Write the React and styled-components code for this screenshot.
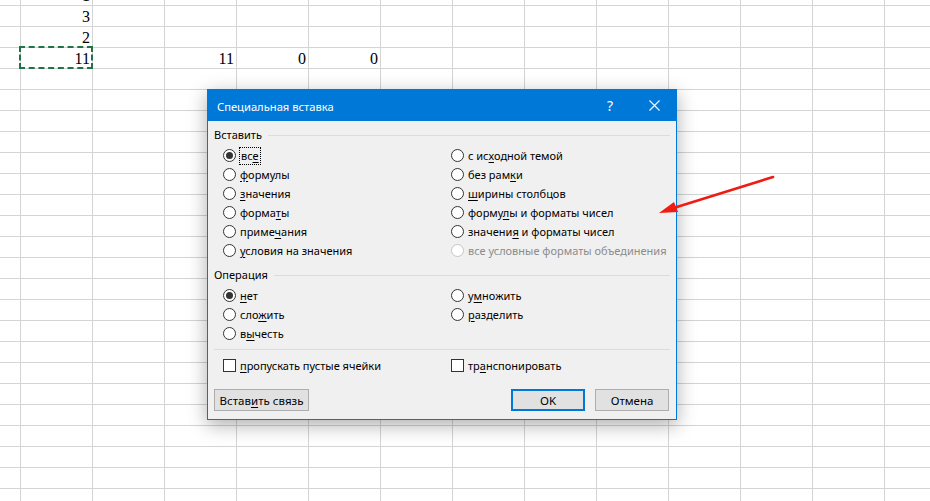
import React from "react";
import styled, { createGlobalStyle } from "styled-components";

const Global = createGlobalStyle`
  html, body { margin: 0; padding: 0; background: #fff; }
  body { overflow: hidden; }
`;

const Page = styled.div`
  position: relative;
  width: 930px;
  height: 501px;
  overflow: hidden;
  background: #fff;
`;

const Sheet = styled.div`
  display: grid;
  grid-template-columns: 21px repeat(13, 72px);
  grid-auto-rows: 21px;
  margin-top: -15px;
`;

const Cell = styled.div`
  position: relative;
  box-sizing: border-box;
  border-right: 1px solid #d4d4d4;
  border-bottom: 1px solid #d4d4d4;
  font-family: "Liberation Serif", serif;
  font-size: 16px;
  line-height: 21px;
  text-align: right;
  padding-right: 2px;
  color: #000;
`;

const Ants = styled.span`
  position: absolute;
  left: -2px;
  top: -2px;
  right: -1px;
  bottom: -1px;
  border: 2px dashed #217346;
`;

const Dialog = styled.div`
  position: absolute;
  left: 207px;
  top: 89px;
  width: 470px;
  box-sizing: border-box;
  border: 1px solid #0078d7;
  background: #f0f0f0;
  box-shadow: 0 5px 18px rgba(0, 0, 0, 0.32);
  font-family: "Noto Sans", sans-serif;
  font-size: 11px;
  color: #000;
`;

const TitleBar = styled.div`
  display: flex;
  align-items: center;
  height: 31px;
  background: #0078d7;
  color: #fff;
`;

const Title = styled.div`
  flex: 1;
  padding-left: 9px;
  font-size: 11.2px;
  margin-top: 1px;
`;

const TitleButton = styled.div`
  width: 44px;
  height: 31px;
  display: flex;
  align-items: center;
  justify-content: center;
  font-size: 14px;
`;

const Body = styled.div`
  padding: 4px 6px 8px 6px;
  display: flex;
  flex-direction: column;
`;

const SectionHeader = styled.div`
  display: flex;
  align-items: center;
  height: 19px;
  margin-top: ${(p) => p.$mt || 0}px;
  margin-bottom: 2px;
  &::after {
    content: "";
    flex: 1;
    height: 1px;
    background: #dcdcdc;
    margin-left: 6px;
    margin-top: 1px;
  }
`;

const OptionGrid = styled.div`
  display: grid;
  grid-template-columns: 228px 1fr;
  grid-auto-flow: column;
  grid-template-rows: repeat(${(p) => p.$rows}, 19px);
  padding-left: 9px;
`;

const Option = styled.div`
  display: flex;
  align-items: center;
  height: 19px;
  white-space: nowrap;
  color: ${(p) => (p.$disabled ? "#8c8c8c" : "#000")};
`;

const RadioCircle = styled.span`
  box-sizing: border-box;
  width: 13px;
  height: 13px;
  border-radius: 50%;
  border: 1px solid ${(p) => (p.$disabled ? "#c6c6c6" : "#333")};
  background: #fff;
  margin-right: 4px;
  display: flex;
  align-items: center;
  justify-content: center;
  flex: none;
  &::after {
    content: "";
    display: ${(p) => (p.$checked ? "block" : "none")};
    width: 7px;
    height: 7px;
    border-radius: 50%;
    background: #333;
  }
`;

const CheckBox = styled.span`
  box-sizing: border-box;
  width: 13px;
  height: 13px;
  border: 1px solid #333;
  background: #fff;
  margin-right: 4px;
  flex: none;
`;

const Text = styled.span`
  white-space: pre;
`;

const Focus = styled.span`
  outline: 1px dotted #000;
  outline-offset: 0px;
  padding: 1px 1px;
  line-height: 14px;
`;

const Key = styled.span`
  text-decoration: underline;
  text-underline-offset: 2px;
`;

const Rule = styled.div`
  height: 1px;
  background: #dcdcdc;
  margin-top: 6px;
  margin-bottom: 6px;
`;

const CheckGrid = styled.div`
  display: grid;
  grid-template-columns: 228px 1fr;
  padding-left: 9px;
`;

const ButtonRow = styled.div`
  display: flex;
  align-items: center;
  margin-top: 14px;
  padding-right: 1px;
`;

const Button = styled.div`
  box-sizing: border-box;
  height: 22px;
  width: ${(p) => p.$w || 74}px;
  margin-left: ${(p) => p.$ml || 0}px;
  background: #e1e1e1;
  border: ${(p) => (p.$primary ? "2px solid #0078d7" : "1px solid #adadad")};
  display: flex;
  align-items: center;
  justify-content: center;
  font-size: 11.5px;
`;

const Spacer = styled.div`
  flex: 1;
`;

const Arrow = styled.svg`
  position: absolute;
  left: 650px;
  top: 170px;
`;

const Lbl = ({ parts }) => (
  <Text>
    {parts.map((p, i) =>
      typeof p === "string" ? <React.Fragment key={i}>{p}</React.Fragment> : <Key key={i}>{p[0]}</Key>
    )}
  </Text>
);

const Radio = ({ checked, disabled, focus, parts }) => (
  <Option $disabled={disabled}>
    <RadioCircle $checked={checked} $disabled={disabled} />
    {focus ? (
      <Focus>
        <Lbl parts={parts} />
      </Focus>
    ) : (
      <Lbl parts={parts} />
    )}
  </Option>
);

const cellData = {
  "0-1": "1",
  "1-1": "3",
  "2-1": "2",
  "3-1": "11",
  "3-3": "11",
  "3-4": "0",
  "3-5": "0",
};

export default function App() {
  const rows = 25;
  const cols = 14;
  const cells = [];
  for (let r = 0; r < rows; r++) {
    for (let c = 0; c < cols; c++) {
      const key = `${r}-${c}`;
      cells.push(
        <Cell key={key}>
          {cellData[key]}
          {r === 3 && c === 1 && <Ants />}
        </Cell>
      );
    }
  }

  return (
    <Page>
      <Global />
      <Sheet>{cells}</Sheet>
      <Dialog>
        <TitleBar>
          <Title>Специальная вставка</Title>
          <TitleButton>?</TitleButton>
          <TitleButton>
            <svg width="11" height="11" viewBox="0 0 11 11">
              <path d="M0.5 0.5 L10.5 10.5 M10.5 0.5 L0.5 10.5" stroke="#fff" strokeWidth="1.1" />
            </svg>
          </TitleButton>
        </TitleBar>
        <Body>
          <SectionHeader>Вставить</SectionHeader>
          <OptionGrid $rows={6}>
            <Radio checked focus parts={["вс", ["е"]]} />
            <Radio parts={[["ф"], "ормулы"]} />
            <Radio parts={[["з"], "начения"]} />
            <Radio parts={["форма", ["т"], "ы"]} />
            <Radio parts={["приме", ["ч"], "ания"]} />
            <Radio parts={[["у"], "словия на значения"]} />
            <Radio parts={["с ис", ["х"], "одной темой"]} />
            <Radio parts={["без рам", ["к"], "и"]} />
            <Radio parts={[["ш"], "ирины столбцов"]} />
            <Radio parts={["форму", ["л"], "ы и форматы чисел"]} />
            <Radio parts={["значени", ["я"], " и форматы чисел"]} />
            <Radio disabled parts={["все условные форматы объединения"]} />
          </OptionGrid>
          <SectionHeader $mt={5}>Операция</SectionHeader>
          <OptionGrid $rows={3}>
            <Radio checked parts={[["н"], "ет"]} />
            <Radio parts={["сло", ["ж"], "ить"]} />
            <Radio parts={["в", ["ы"], "честь"]} />
            <Radio parts={["у", ["м"], "ножить"]} />
            <Radio parts={[["р"], "азделить"]} />
          </OptionGrid>
          <Rule />
          <CheckGrid>
            <Option>
              <CheckBox />
              <Lbl parts={[["п"], "ропускать пустые ячейки"]} />
            </Option>
            <Option>
              <CheckBox />
              <Lbl parts={["тр", ["а"], "нспонировать"]} />
            </Option>
          </CheckGrid>
          <ButtonRow>
            <Button $w={95}>
              <Lbl parts={["Встав", ["и"], "ть связь"]} />
            </Button>
            <Spacer />
            <Button $primary>OK</Button>
            <Button $ml={10}>Отмена</Button>
          </ButtonRow>
        </Body>
      </Dialog>
      <Arrow width="130" height="50" viewBox="0 0 130 50">
        <line x1="123" y1="7" x2="22" y2="38.5" stroke="#ee1c12" strokeWidth="2.6" strokeLinecap="round" />
        <polygon points="9,43 24,32 28,42" fill="#ee1c12" />
      </Arrow>
    </Page>
  );
}
